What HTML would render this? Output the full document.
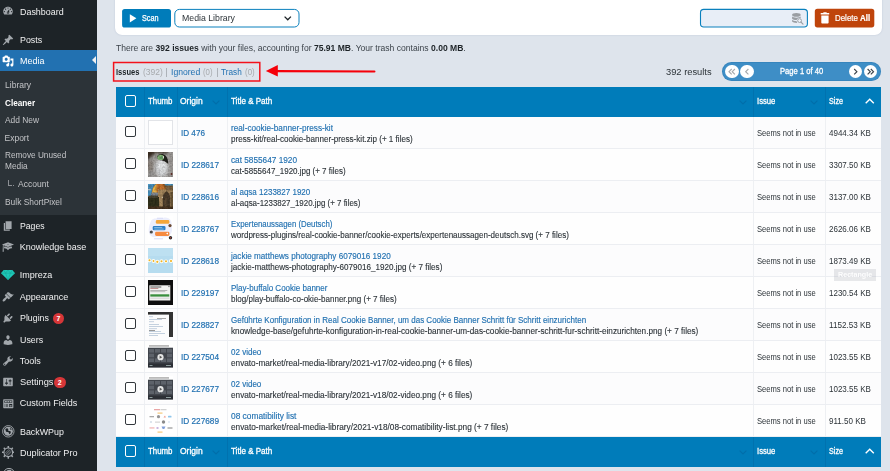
<!DOCTYPE html>
<html><head><meta charset="utf-8"><title>Media Cleaner</title>
<style>
*{box-sizing:border-box;margin:0;padding:0}
html,body{width:890px;height:471px;overflow:hidden}
body{background:#dee4ec;font-family:"Liberation Sans",sans-serif;position:relative;color:#1d2327}
.abs{position:absolute}
.t{position:absolute;white-space:nowrap;height:12px;line-height:12px;transform-origin:0 50%}
.t b.k{color:#1d2327}
.badge{position:absolute;background:#d63638;color:#fff;border-radius:6px;width:11.6px;height:11.6px;line-height:11.6px;font-size:7px;font-weight:bold;text-align:center}
.row{position:absolute;left:116px;width:765px;height:32px;background:#fcfcfd;border-bottom:1px solid #eceef2}
.row.alt{background:#fefefe}
.hdr{position:absolute;left:116px;width:765px;background:#007cba}
.cb{position:absolute;left:8.7px;width:11.2px;height:11.2px;border:1.6px solid #32373c;border-radius:2px;background:#fff}
.hdr .cb{border-color:#fff;background:transparent}
.vl{position:absolute;top:0;bottom:0;width:0;border-left:1px solid #eef0f3}
.hdr .vl{border-left:1px solid rgba(0,50,100,.13)}
.th{position:absolute;left:148px;width:25px;height:25px;overflow:hidden}
.circ{position:absolute;top:65px;width:13.4px;height:13.4px;border-radius:50%;background:#fff}

</style></head><body>

<div class="abs" style="left:0;top:0;width:97px;height:471px;background:#1d2327"></div>
<div class="abs" style="left:0;top:50.2px;width:97px;height:21px;background:#2271b1"></div>
<div class="abs" style="left:0;top:71.2px;width:97px;height:144px;background:#2c3338"></div>
<div class="abs" style="left:92.3px;top:55.9px;width:0;height:0;border:4.8px solid transparent;border-right-color:#f0f0f1;border-left:0"></div>
<svg class="abs" style="left:2.4px;top:5.2px" width="12" height="12" viewBox="0 0 20 20"><path fill="#a2a7ac" d="M3.76 16h12.48c1.1-1.37 1.76-3.11 1.76-5 0-4.42-3.58-8-8-8s-8 3.580-8 8c0 1.890.66 3.630 1.760 5zM10 4c.55 0 1 .45 1 1s-.45 1-1 1-1-.45-1-1 .45-1 1-1zM6 6c.55 0 1 .45 1 1s-.45 1-1 1-1-.45-1-1 .45-1 1-1zm8 0c.55 0 1 .45 1 1s-.45 1-1 1-1-.45-1-1 .45-1 1-1zm-5.370 5.550L12 7v6c0 1.100-.9 2-2 2s-2-.9-2-2c0-.57.240-1.080.630-1.450zM4 10c.55 0 1 .45 1 1s-.45 1-1 1-1-.45-1-1 .45-1 1-1zm12 0c.55 0 1 .45 1 1s-.45 1-1 1-1-.45-1-1 .45-1 1-1zm-5 3c0-.55-.45-1-1-1s-1 .45-1 1 .45 1 1 1 1-.45 1-1z"/></svg>
<svg class="abs" style="left:2.4px;top:33.7px" width="12" height="12" viewBox="0 0 20 20"><path fill="#a2a7ac" d="M10.44 3.02l1.820-1.820 6.360 6.350-1.830 1.820c-1.050-.680-2.480-.570-3.410.360l-.750.750c-.920.930-1.040 2.350-.350 3.410l-1.830 1.820-2.410-2.410-2.800 2.790c-.420.420-3.380 2.710-3.800 2.290s1.860-3.390 2.280-3.810l2.790-2.790L4.100 9.360l1.830-1.820c1.050.690 2.480.570 3.400-.360l.750-.750c.930-.920 1.050-2.350.360-3.410z"/></svg>
<svg class="abs" style="left:2.2px;top:54.5px" width="12" height="12" viewBox="0 0 20 20"><path fill="#fff" d="M13 11V4c0-.55-.45-1-1-1h-1.670L9 1H5L3.670 3H2c-.55 0-1 .45-1 1v7c0 .55.45 1 1 1h10c.55 0 1-.45 1-1zM7 4.500c1.380 0 2.500 1.120 2.500 2.500S8.380 9.500 7 9.500 4.500 8.380 4.500 7 5.620 4.500 7 4.500zM14 6h5v10.500c0 1.380-1.120 2.500-2.500 2.500S14 17.880 14 16.500s1.120-2.500 2.500-2.500c.170 0 .340.020.500.050V9h-3V6zm-4 8.050V13h2v3.500c0 1.380-1.120 2.500-2.500 2.500S7 17.880 7 16.500 8.120 14 9.500 14c.170 0 .340.020.500.050z"/></svg>
<svg class="abs" style="left:2.4px;top:220px" width="12" height="12" viewBox="0 0 20 20"><path fill="#a2a7ac" d="M6 15V2h10v13H6zm-1 1h8v2H3V5h2v11z"/></svg>
<svg class="abs" style="left:2px;top:241px" width="12" height="12" viewBox="0 0 20 20"><path fill="#a2a7ac" d="M10 10L2.540 7.020 3 18H1l.480-11.410L0 6l10-4 10 4zm0-5c-.550 0-1 .220-1 .500s.450.500 1 .500 1-.220 1-.500-.450-.500-1-.500zm0 6l5.570-2.230c.710.940 1.200 2.070 1.360 3.300-.300-.040-.610-.070-.930-.070-2.550 0-4.780 1.370-6 3.410C8.780 13.370 6.550 12 4 12c-.320 0-.630.030-.930.070.160-1.230.650-2.360 1.360-3.300z"/></svg>
<svg class="abs" style="left:2.4px;top:290.5px" width="12" height="12" viewBox="0 0 20 20"><path fill="#a2a7ac" d="M14.480 11.060L7.410 3.990l1.500-1.500c.5-.56 2.300-.47 3.510.32 1.210.8 1.430 1.280 2.910 2.100 1.180.64 2.450 1.260 4.450.85zm-.71.710L6.700 4.700 4.930 6.470c-.39.39-.39 1.020 0 1.410l1.060 1.060c.39.39.39 1.030 0 1.420-.6.6-1.430 1.110-2.210 1.690-.35.260-.7.530-1.010.840C1.430 14.230.4 16.080 1.400 17.070c.99 1 2.840-.03 4.180-1.360.31-.31.580-.66.850-1.020.57-.78 1.080-1.610 1.690-2.210.39-.39 1.020-.39 1.410 0l1.060 1.060c.39.39 1.020.39 1.410 0z"/></svg>
<svg class="abs" style="left:2.4px;top:312px" width="12" height="12" viewBox="0 0 20 20"><path fill="#a2a7ac" d="M13.110 4.360L9.870 7.600 8 5.730l3.240-3.240c.35-.34 1.050-.2 1.560.32.520.51.660 1.210.31 1.550zm-8 1.770l.91-1.120 9.010 9.010-1.190.84c-.71.71-2.630 1.160-3.820 1.160H6.140L4.900 17.260c-.59.59-1.540.59-2.120 0-.59-.58-.59-1.530 0-2.120l1.240-1.240v-3.880c0-1.130.4-3.190 1.090-3.890zm7.260 3.970l3.240-3.240c.34-.35 1.040-.21 1.550.31.520.51.660 1.210.31 1.550l-3.240 3.250z"/></svg>
<svg class="abs" style="left:2.4px;top:333.5px" width="12" height="12" viewBox="0 0 20 20"><path fill="#a2a7ac" d="M10 9.250c-2.270 0-2.730-3.440-2.730-3.440C7 4.020 7.820 2 9.970 2c2.160 0 2.980 2.020 2.710 3.810 0 0-.41 3.440-2.680 3.440zm0 2.570L12.720 10c2.390 0 4.520 2.330 4.520 4.530v2.490s-3.650 1.130-7.240 1.130c-3.650 0-7.240-1.130-7.240-1.130v-2.490c0-2.250 1.940-4.480 4.470-4.480z"/></svg>
<svg class="abs" style="left:2.4px;top:354.5px" width="12" height="12" viewBox="0 0 20 20"><path fill="#a2a7ac" d="M16.680 9.770c-1.340 1.340-3.300 1.670-4.950.99l-5.410 6.520c-.99.990-2.590.990-3.580 0s-.99-2.590 0-3.570l6.520-5.420c-.68-1.650-.35-3.610.99-4.950 1.280-1.280 3.120-1.620 4.720-1.060l-2.890 2.890 2.820 2.820 2.860-2.870c.53 1.580.18 3.390-1.080 4.650zM3.810 16.210c.4.390 1.040.390 1.430 0 .4-.4.4-1.040 0-1.430-.39-.4-1.030-.4-1.430 0-.39.390-.39 1.030 0 1.430z"/></svg>
<svg class="abs" style="left:2.4px;top:376px" width="12" height="12" viewBox="0 0 20 20"><path fill="#a2a7ac" d="M18 16V4c0-.55-.45-1-1-1H3c-.55 0-1 .45-1 1v12c0 .55.45 1 1 1h14c.55 0 1-.45 1-1zM8 11h1c.55 0 1 .45 1 1s-.45 1-1 1H8v1.500c0 .28-.22.500-.5.500s-.5-.22-.5-.5V13H6c-.55 0-1-.45-1-1s.45-1 1-1h1V5.500c0-.28.220-.5.500-.5s.500.220.500.500V11zm5-2h-1c-.55 0-1-.45-1-1s.45-1 1-1h1V5.500c0-.28.220-.5.500-.5s.500.220.500.500V7h1c.55 0 1 .45 1 1s-.45 1-1 1h-1v5.500c0 .28-.22.500-.5.500s-.5-.22-.5-.5V9z"/></svg>
<svg class="abs" style="left:2.2px;top:397.5px" width="12" height="12" viewBox="0 0 20 20"><path fill="#a2a7ac" d="M19 16V3c0-.55-.45-1-1-1H3c-.55 0-1 .45-1 1v13c0 .55.45 1 1 1h15c.55 0 1-.45 1-1zM4 4h13v4H4V4zm1 1v2h3V5H5zm4 0v2h3V5H9zm4 0v2h3V5h-3zm-8.500 5c.28 0 .5.22.5.5s-.22.5-.5.5-.5-.22-.5-.5.22-.5.5-.5zM6 10h4v1H6v-1zm6 0h5v5h-5v-5zm-7.500 2c.28 0 .5.22.5.5s-.22.5-.5.5-.5-.22-.5-.5.22-.5.5-.5zM6 12h4v1H6v-1zm7 0v2h3v-2h-3zm-8.500 2c.28 0 .5.22.5.5s-.22.5-.5.500-.5-.22-.5-.5.22-.5.5-.5zM6 14h4v1H6v-1z"/></svg>
<svg class="abs" style="left:1.4px;top:270px" width="14" height="10" viewBox="0 0 14 10"><path fill="#1fc8b8" d="M2.6 0h8.8L14 3.2 7 10 0 3.200z"/><path d="M0 3.200h14M4.600 3.200L7 10l2.400-6.800M2.600 0l2 3.200L7 0l2.400 3.200 2-3.200" fill="none" stroke="#14a194" stroke-width=".5"/></svg>
<svg class="abs" style="left:2.3px;top:425.2px" width="12.600" height="12.600" viewBox="0 0 12.600 12.600"><circle cx="6.300" cy="6.300" r="5.750" fill="none" stroke="#a2a7ac" stroke-width=".9"/><circle cx="6.300" cy="6.300" r="4.500" fill="#a2a7ac"/><path d="M3.300 4.200c.9-1.300 2.300-1.300 2.800-.5s-.3 1.500.4 2.100 1.500-.2 2.100.6-.1 2.200-1.200 2.700c-.6-.6-.3-1.400-.9-1.900s-1.500.1-2.200-.5-.6-1.700-1-2.500z" fill="#1d2327"/><path d="M8 3.100c.8.300 1.400 1 1.700 1.800-.6.100-1.300-.2-1.600-.7s-.4-.800-.1-1.100z" fill="#1d2327"/></svg>
<svg class="abs" style="left:1.8px;top:446.3px" width="12.600" height="12.600" viewBox="0 0 12.600 12.600"><g fill="#a2a7ac"><rect x="5.550" y="-.1" width="1.500" height="2" rx=".3" transform="rotate(0 6.300 6.300)"/><rect x="5.550" y="-.1" width="1.500" height="2" rx=".3" transform="rotate(45 6.300 6.300)"/><rect x="5.550" y="-.1" width="1.500" height="2" rx=".3" transform="rotate(90 6.300 6.300)"/><rect x="5.550" y="-.1" width="1.500" height="2" rx=".3" transform="rotate(135 6.300 6.300)"/><rect x="5.550" y="-.1" width="1.500" height="2" rx=".3" transform="rotate(180 6.300 6.300)"/><rect x="5.550" y="-.1" width="1.500" height="2" rx=".3" transform="rotate(225 6.300 6.300)"/><rect x="5.550" y="-.1" width="1.500" height="2" rx=".3" transform="rotate(270 6.300 6.300)"/><rect x="5.550" y="-.1" width="1.500" height="2" rx=".3" transform="rotate(315 6.300 6.300)"/></g><circle cx="6.300" cy="6.300" r="4.350" fill="none" stroke="#a2a7ac" stroke-width="1.100"/><path d="M3.600 8.300l4.700-4.700M4.400 9.200l4.800-4.800M3.100 7.200l4.100-4.100M5.500 9.700l4.200-4.200" stroke="#a2a7ac" stroke-width=".55"/></svg>
<svg class="abs" style="left:3.2px;top:467.6px" width="12" height="4" viewBox="0 0 12 4"><circle cx="6" cy="6" r="5.600" fill="none" stroke="#a2a7ac" stroke-width="1"/><path d="M3 3.500c1-1.500 3-2 5-1.500l1 2z" fill="#a2a7ac"/></svg>
<div class="abs" style="left:7.5px;top:180px;width:4.5px;height:6px;border-left:1px solid #8c8f94;border-bottom:1px solid #8c8f94"></div><div class="abs" style="left:12.5px;top:185px;width:1px;height:1px;background:#8c8f94"></div>
<div class="badge" style="left:52.6px;top:312.6px">7</div><div class="badge" style="left:54px;top:376.7px">2</div>
<div class="abs" style="left:115.3px;top:-8px;width:767px;height:42.5px;background:#fff;border-radius:7px;box-shadow:0 0 1.5px rgba(100,120,160,.35)"></div>
<svg class="abs" style="left:0;top:0" width="890" height="90" viewBox="0 0 890 90"><rect x="122.100" y="8.900" width="48.900" height="18.600" rx="2.600" fill="#007cba"/><path d="M129.800 14.300L136.400 18.350 129.800 22.400z" fill="#fff"/><rect x="174.800" y="9.400" width="124.200" height="17.600" rx="4.600" fill="#fff" stroke="#0a80bd" stroke-width="1"/><path d="M284.600 16.600L287.750 19.800 290.900 16.600" fill="none" stroke="#1d2327" stroke-width="1.300"/><rect x="700.500" y="9.400" width="106.900" height="17.600" rx="3.200" fill="#e8eef7" stroke="#0a80bd" stroke-width="1.100"/><rect x="814.800" y="8.800" width="59.500" height="18.600" rx="2.600" fill="#bf440b"/><path d="M823.600 12.300h2.800l.5.800h2.300v1.500h-8.500v-1.500h2.400zM821.300 15.400h7.300v7.100c0 .6-.5 1.100-1.100 1.100h-5.100c-.6 0-1.100-.5-1.100-1.100z" fill="#fff"/><g fill="#9a9ea3"><ellipse cx="796.400" cy="14.900" rx="4.300" ry="1.800"/><path d="M792.100 16.300c.6 1 2.300 1.400 4.300 1.400s3.700-.4 4.300-1.400v1.900c-1-.4-2.500-.2-3.400.7-.3.300-.5.700-.6 1.100-2.200 0-4-.4-4.600-1.300zM792.100 19.800c.6.900 2.300 1.300 4.400 1.300.1.700.4 1.300.8 1.800-2.300.1-4.600-.4-5.200-1.400z"/></g><circle cx="799.600" cy="20.600" r="1.900" fill="#eef2f8" stroke="#9a9ea3" stroke-width=".95"/><path d="M801 22.100l2 2" stroke="#9a9ea3" stroke-width="1.200" stroke-linecap="round"/></svg>
<svg class="abs" style="left:111px;top:60px" width="152" height="24" viewBox="0 0 152 24"><rect x="2.600" y="2.500" width="146.200" height="18.500" fill="none" stroke="#f3121c" stroke-width="1.500"/></svg>
<svg class="abs" style="left:264px;top:63px" width="114" height="17" viewBox="0 0 114 17"><path d="M13 8.200L110.400 8.500" stroke="#f5000a" stroke-width="2.200" stroke-linecap="round"/><path d="M1.800 8L13.800 2.100v11.400z" fill="#f5000a"/></svg>
<div class="abs" style="left:722px;top:61.8px;width:158.6px;height:19.2px;background:#3e8ec6;border-radius:10px;box-shadow:inset 0 0 0 .8px rgba(20,90,150,.22)"></div>
<div class="circ" style="left:725.3px"></div>
<svg class="abs" style="left:0;top:0" width="890" height="90" viewBox="0 0 890 90"><path d="M731.70 69.00L729.00 71.70L731.70 74.40M734.90 69.00L732.20 71.70L734.90 74.40" fill="none" stroke="#a7aaad" stroke-width="1.150"/></svg>
<div class="circ" style="left:740.4px"></div>
<svg class="abs" style="left:0;top:0" width="890" height="90" viewBox="0 0 890 90"><path d="M748.40 69.00L745.70 71.70L748.40 74.40" fill="none" stroke="#a7aaad" stroke-width="1.150"/></svg>
<div class="circ" style="left:848.8px"></div>
<svg class="abs" style="left:0;top:0" width="890" height="90" viewBox="0 0 890 90"><path d="M854.20 69.00L856.90 71.70L854.20 74.40" fill="none" stroke="#3c434a" stroke-width="1.150"/></svg>
<div class="circ" style="left:863.8px"></div>
<svg class="abs" style="left:0;top:0" width="890" height="90" viewBox="0 0 890 90"><path d="M867.60 69.00L870.30 71.70L867.60 74.40M870.80 69.00L873.50 71.70L870.80 74.40" fill="none" stroke="#3c434a" stroke-width="1.150"/></svg>
<div class="hdr" style="top:87px;height:30px"><div class="cb" style="top:8.4px"></div><div class="vl" style="left:28px"></div><div class="vl" style="left:61px"></div><div class="vl" style="left:111px"></div><div class="vl" style="left:637px"></div><div class="vl" style="left:709px"></div><svg class="abs" style="left:96px;top:12.5px" width="8" height="5" viewBox="0 0 8 5"><path d="M.6.600L4 4 7.400.600" fill="none" stroke="rgba(0,60,110,.2)" stroke-width="1.200"/></svg><svg class="abs" style="left:622.5px;top:12.5px" width="8" height="5" viewBox="0 0 8 5"><path d="M.6.600L4 4 7.400.600" fill="none" stroke="rgba(0,60,110,.2)" stroke-width="1.200"/></svg><svg class="abs" style="left:694.2px;top:12.5px" width="8" height="5" viewBox="0 0 8 5"><path d="M.6.600L4 4 7.400.600" fill="none" stroke="rgba(0,60,110,.2)" stroke-width="1.200"/></svg><svg class="abs" style="left:749px;top:11.4px" width="9.500" height="6" viewBox="0 0 9.500 6"><path d="M.7 5.200L4.750 1.200 8.800 5.200" fill="none" stroke="#fff" stroke-width="1.400"/></svg></div>
<div class="row" style="top:117px"><div class="cb" style="top:9px"></div>
<div class="vl" style="left:28px"></div>
<div class="vl" style="left:61px"></div>
<div class="vl" style="left:111px"></div>
<div class="vl" style="left:637px"></div>
<div class="vl" style="left:709px"></div>
</div>
<div class="row alt" style="top:149px"><div class="cb" style="top:9px"></div>
<div class="vl" style="left:28px"></div>
<div class="vl" style="left:61px"></div>
<div class="vl" style="left:111px"></div>
<div class="vl" style="left:637px"></div>
<div class="vl" style="left:709px"></div>
</div>
<div class="row" style="top:181px"><div class="cb" style="top:9px"></div>
<div class="vl" style="left:28px"></div>
<div class="vl" style="left:61px"></div>
<div class="vl" style="left:111px"></div>
<div class="vl" style="left:637px"></div>
<div class="vl" style="left:709px"></div>
</div>
<div class="row alt" style="top:213px"><div class="cb" style="top:9px"></div>
<div class="vl" style="left:28px"></div>
<div class="vl" style="left:61px"></div>
<div class="vl" style="left:111px"></div>
<div class="vl" style="left:637px"></div>
<div class="vl" style="left:709px"></div>
</div>
<div class="row" style="top:245px"><div class="cb" style="top:9px"></div>
<div class="vl" style="left:28px"></div>
<div class="vl" style="left:61px"></div>
<div class="vl" style="left:111px"></div>
<div class="vl" style="left:637px"></div>
<div class="vl" style="left:709px"></div>
</div>
<div class="row alt" style="top:277px"><div class="cb" style="top:9px"></div>
<div class="vl" style="left:28px"></div>
<div class="vl" style="left:61px"></div>
<div class="vl" style="left:111px"></div>
<div class="vl" style="left:637px"></div>
<div class="vl" style="left:709px"></div>
</div>
<div class="row" style="top:309px"><div class="cb" style="top:9px"></div>
<div class="vl" style="left:28px"></div>
<div class="vl" style="left:61px"></div>
<div class="vl" style="left:111px"></div>
<div class="vl" style="left:637px"></div>
<div class="vl" style="left:709px"></div>
</div>
<div class="row alt" style="top:341px"><div class="cb" style="top:9px"></div>
<div class="vl" style="left:28px"></div>
<div class="vl" style="left:61px"></div>
<div class="vl" style="left:111px"></div>
<div class="vl" style="left:637px"></div>
<div class="vl" style="left:709px"></div>
</div>
<div class="row" style="top:373px"><div class="cb" style="top:9px"></div>
<div class="vl" style="left:28px"></div>
<div class="vl" style="left:61px"></div>
<div class="vl" style="left:111px"></div>
<div class="vl" style="left:637px"></div>
<div class="vl" style="left:709px"></div>
</div>
<div class="row alt" style="top:405px"><div class="cb" style="top:9px"></div>
<div class="vl" style="left:28px"></div>
<div class="vl" style="left:61px"></div>
<div class="vl" style="left:111px"></div>
<div class="vl" style="left:637px"></div>
<div class="vl" style="left:709px"></div>
</div>
<div class="hdr" style="top:437px;height:30px"><div class="cb" style="top:8.4px"></div><div class="vl" style="left:28px"></div><div class="vl" style="left:61px"></div><div class="vl" style="left:111px"></div><div class="vl" style="left:637px"></div><div class="vl" style="left:709px"></div><svg class="abs" style="left:96px;top:12.5px" width="8" height="5" viewBox="0 0 8 5"><path d="M.6.600L4 4 7.400.600" fill="none" stroke="rgba(0,60,110,.2)" stroke-width="1.200"/></svg><svg class="abs" style="left:622.5px;top:12.5px" width="8" height="5" viewBox="0 0 8 5"><path d="M.6.600L4 4 7.400.600" fill="none" stroke="rgba(0,60,110,.2)" stroke-width="1.200"/></svg><svg class="abs" style="left:694.2px;top:12.5px" width="8" height="5" viewBox="0 0 8 5"><path d="M.6.600L4 4 7.400.600" fill="none" stroke="rgba(0,60,110,.2)" stroke-width="1.200"/></svg><svg class="abs" style="left:749px;top:11.4px" width="9.500" height="6" viewBox="0 0 9.500 6"><path d="M.7 5.200L4.750 1.200 8.800 5.200" fill="none" stroke="#fff" stroke-width="1.400"/></svg></div>
<div class="th" style="top:120.1px;left:148.2px;width:24.8px;height:25.4px;background:#fff;border:1px solid #e2e4e8"></div>
<svg class="th" style="top:152.2px;left:148.1px" viewBox="0 0 25 25"><defs><filter id="nz" x="0" y="0" width="100%" height="100%"><feTurbulence type="fractalNoise" baseFrequency=".55" numOctaves="2" seed="3" result="n"/><feColorMatrix in="n" type="matrix" values="0 0 0 0 0  0 0 0 0 0  0 0 0 0 0  1.2 1.2 1.2 0 -1.45" result="a"/><feComposite in="a" in2="SourceGraphic" operator="in"/></filter><filter id="bl"><feGaussianBlur stdDeviation=".7"/></filter><filter id="bl2"><feGaussianBlur stdDeviation="1.6"/></filter></defs><rect width="25" height="25" fill="#a19e9b"/><g filter="url(#bl2)"><path d="M-3 -3h14l-6 6-8 7z" fill="#3a2e24"/><rect x="-3" y="9" width="8" height="10" fill="#8d857e"/><rect x="9" y="-3" width="11" height="4.500" fill="#4a4036"/><ellipse cx="13.500" cy="16" rx="6.500" ry="9" fill="#d9dbdd"/><ellipse cx="14" cy="12.500" rx="4" ry="4" fill="#eceef0"/><rect x="20.500" y="2" width="7" height="25" fill="#a09c99"/><rect x="-2" y="19" width="8" height="8" fill="#9a9896"/></g><g filter="url(#bl)"><path d="M9 4.500c1.500-3 6-3.500 8.500-1s2.500 5.500 2.800 8.500c-1.800-1.500-3.300-3-5.300-3.300S10 8.700 9 4.500z" fill="#24221d"/><ellipse cx="12.600" cy="5.400" rx="3.300" ry="2.700" fill="#86b877"/><ellipse cx="13.400" cy="5.600" rx="1.300" ry="1.700" fill="#5f9560"/><rect x="15" y="4" width=".9" height="2.200" fill="#e9efe6"/><circle cx="23.500" cy="22" r="1" fill="#5c2a22"/></g><rect width="25" height="25" fill="#4a3c30" filter="url(#nz)" opacity=".2"/></svg>
<svg class="th" style="top:184.1px;left:148.1px" viewBox="0 0 25 25"><rect width="25" height="25" fill="#7b6243"/><g filter="url(#bl)"><rect x="-2" y="-2" width="30" height="14" fill="#4c96c4"/><rect x="0" y="5" width="2.500" height="1.300" fill="#cfe2ef"/><path d="M4 9c0-6 4-10.500 8-10.500S19.500 3 19.500 9z" fill="#c8732d"/><path d="M4 9c.2-4 2-7.500 5-9.300C8 2.500 8.300 6 9 9z" fill="#e9b548"/><path d="M15 -1c2.500 1.500 4.500 5 4.500 10h-3c.2-4-.3-7.500-1.500-10z" fill="#8c5a28"/><rect x="3" y="8.500" width="7.500" height="5" fill="#7e8792"/><rect x="10" y="5.500" width="16" height="21" fill="#a88a5f"/><rect x="18" y="1.500" width="8" height="5" fill="#7d6240"/><path d="M14.800 26V13.500c0-3 1.800-5.300 3.700-6.300 1.900 1 3.700 3.300 3.700 6.300V26z" fill="#4a3a29"/><path d="M16.500 26v-9c0-1.500.8-2.800 2-3.500v12.500z" fill="#5b4a33"/><rect x="22.500" y="8" width="3" height="18" fill="#6d5838"/><rect x="-2" y="13" width="13" height="14" fill="#33301f"/><rect x="1" y="11.500" width="9" height="2.500" fill="#4b4636"/><rect x="-1" y="22.500" width="27" height="3.500" fill="#4a3520"/></g><circle cx="14.300" cy="13.300" r=".6" fill="#e8e0c8"/><rect width="25" height="25" fill="#2a1c10" filter="url(#nz)" opacity=".25"/></svg>
<svg class="th" style="top:216.2px;left:148.1px" viewBox="0 0 25 25"><rect width="25" height="25" fill="#fff"/><path d="M3 5c2-4 9-2 12-3s6 0 7.500 2 1 5 1.500 8-1 8-5 9-8-1-11 0-6-1-7-4S1 9 3 5z" fill="#eceefc"/><rect x="7.800" y="4.100" width="13.600" height="3.700" rx="1.300" fill="#f4a63a"/><rect x="4.700" y="10.100" width="12.800" height="4.200" rx="1.300" fill="#2e7fc6"/><rect x="6.200" y="11.300" width="8" height=".7" fill="#9fd0f0"/><rect x="6.200" y="12.700" width="9.500" height=".7" fill="#9fd0f0"/><rect x="7.100" y="15.800" width="14.300" height="4.100" rx="1.300" fill="#f68a40"/><path d="M18 17.500l2 -1v2z" fill="#fff"/><circle cx="22" cy="9.600" r="1.600" fill="#6b4a32"/><circle cx="3.300" cy="16" r="1.600" fill="#4a4a4a"/><circle cx="22.500" cy="21.800" r="1.700" fill="#2b2b2b"/><circle cx="22.500" cy="21.800" r=".6" fill="#e24a3a"/><rect x="9" y="1.800" width="6" height=".7" fill="#c9cdf3"/><rect x="6" y="22.500" width="9" height=".7" fill="#c9cdf3"/></svg>
<svg class="th" style="top:248.2px;left:148.1px" viewBox="0 0 25 25"><rect width="25" height="25" fill="#b6dcef"/><rect y="0" width="25" height="8" fill="#c2e2f2" opacity=".6"/><g fill="#fdfdf6"><circle cx="1.500" cy="12.300" r="1.900"/><circle cx="5.500" cy="13" r="1.900"/><circle cx="9.300" cy="13.800" r="2"/><circle cx="13.500" cy="13.300" r="2"/><circle cx="18" cy="13.300" r="1.900"/><circle cx="23" cy="13" r="2.100"/></g><g fill="#f3b21f"><circle cx="1.500" cy="12.300" r="1"/><circle cx="5.500" cy="13" r=".9"/><circle cx="9.300" cy="13.800" r="1.100"/><circle cx="13.500" cy="13.300" r="1"/><circle cx="18" cy="13.300" r="1"/><circle cx="23" cy="13" r="1.100"/></g></svg>
<svg class="th" style="top:280.2px;left:148.1px" viewBox="0 0 25 25"><rect width="25" height="25" fill="#0e0e0e"/><rect x="1.300" y="5.300" width="21" height="15.200" fill="#f3f3f1"/><rect x="2.300" y="6.500" width="11" height="1" fill="#555"/><rect x="2.300" y="8.300" width="8" height=".7" fill="#a66"/><rect x="2.300" y="10" width="17" height=".7" fill="#999"/><rect x="2.300" y="11.400" width="15" height=".7" fill="#aaa"/><rect x="2.300" y="14.300" width="19" height="2.300" fill="#3a8f3e"/><rect x="2.300" y="17.500" width="19" height="1.500" fill="#ddd"/><rect x="20.300" y="5.800" width="1.300" height="1.300" fill="#777"/></svg>
<svg class="th" style="top:312.2px;left:148.1px" viewBox="0 0 25 25"><rect width="25" height="25" fill="#fcfcfc"/><rect width="25" height="2.600" fill="#2f2f2f"/><rect x="21" width="4" height="25" fill="#333"/><g fill="#9fb4cc"><rect x="1" y="4.500" width="4" height=".6"/><rect x="1" y="7" width="13" height=".6"/><rect x="1" y="9.500" width="5" height=".6"/><rect x="1" y="12" width="10" height=".6"/><rect x="1" y="14" width="14" height=".6"/><rect x="1" y="16.500" width="8" height=".6"/><rect x="1" y="19" width="12" height=".6"/><rect x="1" y="21" width="16" height=".6"/><rect x="1" y="23" width="9" height=".6"/></g><g fill="#555"><rect x="1" y="18" width="6" height=".6"/><rect x="9" y="6" width="9" height=".5"/></g></svg>
<svg class="th" style="top:344.2px;left:148.1px" viewBox="0 0 25 25"><rect width="25" height="25" fill="#fff"/><rect x="1" y="1.500" width="20" height=".9" fill="#777"/><rect y="3.700" width="25" height="19.700" fill="#41454c"/><g fill="#5d626a"><rect x="1" y="5" width="5" height="3.600"/><rect x="7" y="5" width="5" height="3.600"/><rect x="13" y="5" width="5" height="3.600"/><rect x="19" y="5" width="5" height="3.600"/><rect x="1" y="9.7" width="5" height="3.600"/><rect x="19" y="9.7" width="5" height="3.600"/><rect x="1" y="14.4" width="5" height="3.600"/><rect x="7" y="14.4" width="5" height="3.600"/><rect x="13" y="14.4" width="5" height="3.600"/><rect x="19" y="14.4" width="5" height="3.600"/></g><rect y="19.500" width="25" height="3.900" fill="#2c2f35"/><rect x="1.500" y="21" width="3" height=".9" fill="#9aa"/><rect x="18" y="21" width="5" height=".9" fill="#9aa"/><circle cx="12.500" cy="13.200" r="3.100" fill="#f2f2f2" opacity=".93"/><path d="M11.600 11.600l2.600 1.600-2.600 1.600z" fill="#555"/></svg>
<svg class="th" style="top:376.2px;left:148.1px" viewBox="0 0 25 25"><rect width="25" height="25" fill="#fff"/><rect x="1" y="1.500" width="20" height=".9" fill="#777"/><rect y="3.700" width="25" height="19.700" fill="#41454c"/><g fill="#5d626a"><rect x="1" y="5" width="5" height="3.600"/><rect x="7" y="5" width="5" height="3.600"/><rect x="13" y="5" width="5" height="3.600"/><rect x="19" y="5" width="5" height="3.600"/><rect x="1" y="9.7" width="5" height="3.600"/><rect x="19" y="9.7" width="5" height="3.600"/><rect x="1" y="14.4" width="5" height="3.600"/><rect x="7" y="14.4" width="5" height="3.600"/><rect x="13" y="14.4" width="5" height="3.600"/><rect x="19" y="14.4" width="5" height="3.600"/></g><rect y="19.500" width="25" height="3.900" fill="#2c2f35"/><rect x="1.500" y="21" width="3" height=".9" fill="#9aa"/><rect x="18" y="21" width="5" height=".9" fill="#9aa"/><circle cx="12.500" cy="13.200" r="3.100" fill="#f2f2f2" opacity=".93"/><path d="M11.600 11.600l2.600 1.600-2.600 1.600z" fill="#555"/></svg>
<svg class="th" style="top:408.2px;left:148.1px" viewBox="0 0 25 25"><rect width="25" height="25" fill="#fff"/><g opacity=".62"><rect x="6" y="1.300" width="6" height=".9" fill="#c33"/><rect x="12.500" y="1.300" width="6" height=".9" fill="#999"/><rect x="9.500" y="4.500" width="5" height="1.200" fill="#f0a52a"/><rect x="1.500" y="8" width="4.500" height="1.300" fill="#777"/><circle cx="10.500" cy="8.700" r="1.600" fill="#555"/><path d="M15.500 9.500l1.500-2 .8 2z" fill="#e6553a"/><rect x="20" y="7.800" width="3.500" height="1.800" rx=".5" fill="#4aa3e0"/><circle cx="3" cy="14" r="1.100" fill="#bcd"/><rect x="7" y="13.700" width="5" height=".8" fill="#999"/><circle cx="15.500" cy="14" r="1.700" fill="#444"/><circle cx="21" cy="14" r="1" fill="#cde"/><rect x="1.500" y="19.500" width="5" height=".9" fill="#d55"/><rect x="8.500" y="19" width="2" height="2" fill="#a8c"/><path d="M13.500 18.500h4l-1.200 2.500h-1.600z" fill="#3566c4"/><rect x="19.500" y="19.500" width="5" height="1" fill="#333"/><rect x="9.500" y="23.500" width="5" height="1.200" fill="#f0a52a"/></g></svg>

<div class="abs" style="left:834.2px;top:269px;width:41.4px;height:12.3px;background:rgba(150,155,165,.22)"></div>
<div class="abs" style="left:0;top:0;width:890px;height:471px;will-change:transform">
<div class="t" style="left:19.7px;top:5.5px;font-size:9px;transform:scaleX(0.990);color:#f0f0f1">Dashboard</div>
<div class="t" style="left:19.7px;top:33.6px;font-size:9px;transform:scaleX(0.982);color:#f0f0f1">Posts</div>
<div class="t" style="left:19.7px;top:54.9px;font-size:9px;transform:scaleX(0.995);color:#fff">Media</div>
<div class="t" style="left:19.7px;top:220.3px;font-size:9px;transform:scaleX(0.964);color:#f0f0f1">Pages</div>
<div class="t" style="left:19.7px;top:241.3px;font-size:9px;color:#f0f0f1">Knowledge base</div>
<div class="t" style="left:19.7px;top:269.3px;font-size:9px;color:#f0f0f1">Impreza</div>
<div class="t" style="left:19.7px;top:290.9px;font-size:9px;color:#f0f0f1">Appearance</div>
<div class="t" style="left:19.7px;top:312.2px;font-size:9px;transform:scaleX(0.979);color:#f0f0f1">Plugins</div>
<div class="t" style="left:19.7px;top:333.5px;font-size:9px;transform:scaleX(0.982);color:#f0f0f1">Users</div>
<div class="t" style="left:19.7px;top:354.8px;font-size:9px;color:#f0f0f1">Tools</div>
<div class="t" style="left:19.7px;top:376.3px;font-size:9px;transform:scaleX(1.030);color:#f0f0f1">Settings</div>
<div class="t" style="left:19.7px;top:397.3px;font-size:9px;color:#f0f0f1">Custom Fields</div>
<div class="t" style="left:19.7px;top:425.8px;font-size:9px;transform:scaleX(0.984);color:#f0f0f1">BackWPup</div>
<div class="t" style="left:19.7px;top:447.3px;font-size:9px;transform:scaleX(1.008);color:#f0f0f1">Duplicator Pro</div>
<div class="t" style="left:4.5px;top:79.2px;font-size:8.5px;transform:scaleX(1.004);color:#c3c4c7;">Library</div>
<div class="t" style="left:4.5px;top:96.5px;font-size:8.5px;transform:scaleX(0.965);color:#c3c4c7;color:#fff;font-weight:bold">Cleaner</div>
<div class="t" style="left:4.5px;top:114.3px;font-size:8.5px;transform:scaleX(0.986);color:#c3c4c7;">Add New</div>
<div class="t" style="left:4.5px;top:131.5px;font-size:8.5px;color:#c3c4c7;">Export</div>
<div class="t" style="left:4.5px;top:149.1px;font-size:8.5px;transform:scaleX(0.967);color:#c3c4c7;">Remove Unused</div>
<div class="t" style="left:4.5px;top:160.1px;font-size:8.5px;transform:scaleX(0.976);color:#c3c4c7;">Media</div>
<div class="t" style="left:18px;top:177.9px;font-size:8.5px;transform:scaleX(1.006);color:#c3c4c7;">Account</div>
<div class="t" style="left:4.5px;top:195.5px;font-size:8.5px;transform:scaleX(0.987);color:#c3c4c7;">Bulk ShortPixel</div>
<div class="t" style="left:142.4px;top:12.4px;font-size:8.4px;transform:scaleX(0.869);color:#fff;-webkit-text-stroke:.25px #fff">Scan</div>
<div class="t" style="left:181.9px;top:12.4px;font-size:9.2px;transform:scaleX(0.952);color:#2c3338">Media Library</div>
<div class="t" style="left:834.9px;top:12.4px;font-size:8.4px;transform:scaleX(0.945);color:#fff;-webkit-text-stroke:.2px #fff">Delete <b>All</b></div>
<div class="t" style="left:116.3px;top:41.9px;font-size:8.6px;transform:scaleX(0.996);color:#3c434a">There are <b class="k">392 issues</b> with your files, accounting for <b class="k">75.91 MB</b>. Your trash contains <b class="k">0.00 MB</b>.</div>
<div class="t" style="left:116.3px;top:65.5px;font-size:8.9px;transform:scaleX(0.847);color:#1d2327;font-weight:bold">Issues</div>
<div class="t" style="left:142.8px;top:65.5px;font-size:8.9px;transform:scaleX(0.956);color:#a7aaad">(392)</div>
<div class="t" style="left:166px;top:66.2px;font-size:8.4px;transform:scaleX(0.686);color:#787c82">|</div>
<div class="t" style="left:170.7px;top:65.5px;font-size:8.9px;transform:scaleX(0.970);color:#2271b1">Ignored</div>
<div class="t" style="left:203.3px;top:65.5px;font-size:8.9px;transform:scaleX(0.884);color:#a7aaad">(0)</div>
<div class="t" style="left:216.8px;top:66.2px;font-size:8.4px;transform:scaleX(0.686);color:#787c82">|</div>
<div class="t" style="left:221.2px;top:65.5px;font-size:8.9px;transform:scaleX(0.926);color:#2271b1">Trash</div>
<div class="t" style="left:244.8px;top:65.5px;font-size:8.9px;transform:scaleX(0.893);color:#a7aaad">(0)</div>
<div class="t" style="left:666.4px;top:65.6px;font-size:9.6px;transform:scaleX(0.972);color:#2c3338">392 results</div>
<div class="t" style="left:780.3px;top:65.3px;font-size:8.8px;transform:scaleX(0.866);color:#fff;-webkit-text-stroke:.3px #fff">Page 1 of 40</div>
<div class="t" style="left:838.3px;top:268.8px;font-size:7.6px;transform:scaleX(0.942);color:rgba(255,255,255,.92);font-weight:bold">Rectangle</div>
<div class="t" style="left:148px;top:95.4px;font-size:8.9px;transform:scaleX(0.887);color:#fff;-webkit-text-stroke:.3px #fff">Thumb</div>
<div class="t" style="left:180.2px;top:95.4px;font-size:8.9px;transform:scaleX(0.954);color:#fff;-webkit-text-stroke:.3px #fff">Origin</div>
<div class="t" style="left:230.5px;top:95.4px;font-size:8.9px;transform:scaleX(0.907);color:#fff;-webkit-text-stroke:.3px #fff">Title &amp; Path</div>
<div class="t" style="left:756.5px;top:95.4px;font-size:8.9px;transform:scaleX(0.867);color:#fff;-webkit-text-stroke:.3px #fff">Issue</div>
<div class="t" style="left:829.3px;top:95.4px;font-size:8.9px;transform:scaleX(0.811);color:#fff;-webkit-text-stroke:.3px #fff">Size</div>
<div class="t" style="left:148px;top:445.2px;font-size:8.9px;transform:scaleX(0.887);color:#fff;-webkit-text-stroke:.3px #fff">Thumb</div>
<div class="t" style="left:180.2px;top:445.2px;font-size:8.9px;transform:scaleX(0.954);color:#fff;-webkit-text-stroke:.3px #fff">Origin</div>
<div class="t" style="left:230.5px;top:445.2px;font-size:8.9px;transform:scaleX(0.907);color:#fff;-webkit-text-stroke:.3px #fff">Title &amp; Path</div>
<div class="t" style="left:756.5px;top:445.2px;font-size:8.9px;transform:scaleX(0.867);color:#fff;-webkit-text-stroke:.3px #fff">Issue</div>
<div class="t" style="left:829.3px;top:445.2px;font-size:8.9px;transform:scaleX(0.811);color:#fff;-webkit-text-stroke:.3px #fff">Size</div>
<div class="t" style="left:180.8px;top:127px;font-size:8.6px;transform:scaleX(0.944);color:#2271b1;-webkit-text-stroke:.18px #2271b1">ID 476</div>
<div class="t" style="left:230.9px;top:121.8px;font-size:8.8px;transform:scaleX(0.931);color:#2271b1;-webkit-text-stroke:.15px #2271b1">real-cookie-banner-press-kit</div>
<div class="t" style="left:230.9px;top:132.6px;font-size:8.4px;transform:scaleX(0.965);color:#2c3338;-webkit-text-stroke:.12px #2c3338">press-kit/real-cookie-banner-press-kit.zip (+ 1 files)</div>
<div class="t" style="left:756.5px;top:127.4px;font-size:8.7px;transform:scaleX(0.874);color:#2c3338">Seems not in use</div>
<div class="t" style="left:829.3px;top:127.4px;font-size:8.7px;transform:scaleX(0.921);color:#2c3338">4944.34 KB</div>
<div class="t" style="left:180.8px;top:159px;font-size:8.6px;transform:scaleX(0.958);color:#2271b1;-webkit-text-stroke:.18px #2271b1">ID 228617</div>
<div class="t" style="left:230.9px;top:153.8px;font-size:8.8px;transform:scaleX(0.937);color:#2271b1;-webkit-text-stroke:.15px #2271b1">cat 5855647 1920</div>
<div class="t" style="left:230.9px;top:164.6px;font-size:8.4px;transform:scaleX(0.952);color:#2c3338;-webkit-text-stroke:.12px #2c3338">cat-5855647_1920.jpg (+ 7 files)</div>
<div class="t" style="left:756.5px;top:159.4px;font-size:8.7px;transform:scaleX(0.874);color:#2c3338">Seems not in use</div>
<div class="t" style="left:829.3px;top:159.4px;font-size:8.7px;transform:scaleX(0.921);color:#2c3338">3307.50 KB</div>
<div class="t" style="left:180.8px;top:191px;font-size:8.6px;transform:scaleX(0.958);color:#2271b1;-webkit-text-stroke:.18px #2271b1">ID 228616</div>
<div class="t" style="left:230.9px;top:185.8px;font-size:8.8px;transform:scaleX(0.910);color:#2271b1;-webkit-text-stroke:.15px #2271b1">al aqsa 1233827 1920</div>
<div class="t" style="left:230.9px;top:196.6px;font-size:8.4px;transform:scaleX(0.947);color:#2c3338;-webkit-text-stroke:.12px #2c3338">al-aqsa-1233827_1920.jpg (+ 7 files)</div>
<div class="t" style="left:756.5px;top:191.4px;font-size:8.7px;transform:scaleX(0.874);color:#2c3338">Seems not in use</div>
<div class="t" style="left:829.3px;top:191.4px;font-size:8.7px;transform:scaleX(0.921);color:#2c3338">3137.00 KB</div>
<div class="t" style="left:180.8px;top:223px;font-size:8.6px;transform:scaleX(0.958);color:#2271b1;-webkit-text-stroke:.18px #2271b1">ID 228767</div>
<div class="t" style="left:230.9px;top:217.8px;font-size:8.8px;transform:scaleX(0.890);color:#2271b1;-webkit-text-stroke:.15px #2271b1">Expertenaussagen (Deutsch)</div>
<div class="t" style="left:230.9px;top:228.6px;font-size:8.4px;transform:scaleX(0.958);color:#2c3338;-webkit-text-stroke:.12px #2c3338">wordpress-plugins/real-cookie-banner/cookie-experts/expertenaussagen-deutsch.svg (+ 7 files)</div>
<div class="t" style="left:756.5px;top:223.4px;font-size:8.7px;transform:scaleX(0.874);color:#2c3338">Seems not in use</div>
<div class="t" style="left:829.3px;top:223.4px;font-size:8.7px;transform:scaleX(0.921);color:#2c3338">2626.06 KB</div>
<div class="t" style="left:180.8px;top:255px;font-size:8.6px;transform:scaleX(0.958);color:#2271b1;-webkit-text-stroke:.18px #2271b1">ID 228618</div>
<div class="t" style="left:230.9px;top:249.8px;font-size:8.8px;transform:scaleX(0.925);color:#2271b1;-webkit-text-stroke:.15px #2271b1">jackie matthews photography 6079016 1920</div>
<div class="t" style="left:230.9px;top:260.6px;font-size:8.4px;transform:scaleX(0.967);color:#2c3338;-webkit-text-stroke:.12px #2c3338">jackie-matthews-photography-6079016_1920.jpg (+ 7 files)</div>
<div class="t" style="left:756.5px;top:255.4px;font-size:8.7px;transform:scaleX(0.874);color:#2c3338">Seems not in use</div>
<div class="t" style="left:829.3px;top:255.4px;font-size:8.7px;transform:scaleX(0.921);color:#2c3338">1873.49 KB</div>
<div class="t" style="left:180.8px;top:287px;font-size:8.6px;transform:scaleX(0.958);color:#2271b1;-webkit-text-stroke:.18px #2271b1">ID 229197</div>
<div class="t" style="left:230.9px;top:281.8px;font-size:8.8px;transform:scaleX(0.910);color:#2271b1;-webkit-text-stroke:.15px #2271b1">Play-buffalo Cookie banner</div>
<div class="t" style="left:230.9px;top:292.6px;font-size:8.4px;transform:scaleX(0.959);color:#2c3338;-webkit-text-stroke:.12px #2c3338">blog/play-buffalo-co-okie-banner.png (+ 7 files)</div>
<div class="t" style="left:756.5px;top:287.4px;font-size:8.7px;transform:scaleX(0.874);color:#2c3338">Seems not in use</div>
<div class="t" style="left:829.3px;top:287.4px;font-size:8.7px;transform:scaleX(0.921);color:#2c3338">1230.54 KB</div>
<div class="t" style="left:180.8px;top:319px;font-size:8.6px;transform:scaleX(0.958);color:#2271b1;-webkit-text-stroke:.18px #2271b1">ID 228827</div>
<div class="t" style="left:230.9px;top:313.8px;font-size:8.8px;transform:scaleX(0.910);color:#2271b1;-webkit-text-stroke:.15px #2271b1">Geführte Konfiguration in Real Cookie Banner, um das Cookie Banner Schritt für Schritt einzurichten</div>
<div class="t" style="left:230.9px;top:324.6px;font-size:8.4px;transform:scaleX(0.979);color:#2c3338;-webkit-text-stroke:.12px #2c3338">knowledge-base/gefuhrte-konfiguration-in-real-cookie-banner-um-das-cookie-banner-schritt-fur-schritt-einzurichten.png (+ 7 files)</div>
<div class="t" style="left:756.5px;top:319.4px;font-size:8.7px;transform:scaleX(0.874);color:#2c3338">Seems not in use</div>
<div class="t" style="left:829.3px;top:319.4px;font-size:8.7px;transform:scaleX(0.934);color:#2c3338">1152.53 KB</div>
<div class="t" style="left:180.8px;top:351px;font-size:8.6px;transform:scaleX(0.958);color:#2271b1;-webkit-text-stroke:.18px #2271b1">ID 227504</div>
<div class="t" style="left:230.9px;top:345.8px;font-size:8.8px;transform:scaleX(0.911);color:#2271b1;-webkit-text-stroke:.15px #2271b1">02 video</div>
<div class="t" style="left:230.9px;top:356.6px;font-size:8.4px;transform:scaleX(0.981);color:#2c3338;-webkit-text-stroke:.12px #2c3338">envato-market/real-media-library/2021-v17/02-video.png (+ 6 files)</div>
<div class="t" style="left:756.5px;top:351.4px;font-size:8.7px;transform:scaleX(0.874);color:#2c3338">Seems not in use</div>
<div class="t" style="left:829.3px;top:351.4px;font-size:8.7px;transform:scaleX(0.921);color:#2c3338">1023.55 KB</div>
<div class="t" style="left:180.8px;top:383px;font-size:8.6px;transform:scaleX(0.958);color:#2271b1;-webkit-text-stroke:.18px #2271b1">ID 227677</div>
<div class="t" style="left:230.9px;top:377.8px;font-size:8.8px;transform:scaleX(0.911);color:#2271b1;-webkit-text-stroke:.15px #2271b1">02 video</div>
<div class="t" style="left:230.9px;top:388.6px;font-size:8.4px;transform:scaleX(0.981);color:#2c3338;-webkit-text-stroke:.12px #2c3338">envato-market/real-media-library/2021-v18/02-video.png (+ 6 files)</div>
<div class="t" style="left:756.5px;top:383.4px;font-size:8.7px;transform:scaleX(0.874);color:#2c3338">Seems not in use</div>
<div class="t" style="left:829.3px;top:383.4px;font-size:8.7px;transform:scaleX(0.921);color:#2c3338">1023.55 KB</div>
<div class="t" style="left:180.8px;top:415px;font-size:8.6px;transform:scaleX(0.958);color:#2271b1;-webkit-text-stroke:.18px #2271b1">ID 227689</div>
<div class="t" style="left:230.9px;top:409.8px;font-size:8.8px;transform:scaleX(0.949);color:#2271b1;-webkit-text-stroke:.15px #2271b1">08 comatibility list</div>
<div class="t" style="left:230.9px;top:420.6px;font-size:8.4px;transform:scaleX(0.989);color:#2c3338;-webkit-text-stroke:.12px #2c3338">envato-market/real-media-library/2021-v18/08-comatibility-list.png (+ 7 files)</div>
<div class="t" style="left:756.5px;top:415.4px;font-size:8.7px;transform:scaleX(0.874);color:#2c3338">Seems not in use</div>
<div class="t" style="left:829.3px;top:415.4px;font-size:8.7px;transform:scaleX(0.926);color:#2c3338">911.50 KB</div>
</div>

</body></html>
